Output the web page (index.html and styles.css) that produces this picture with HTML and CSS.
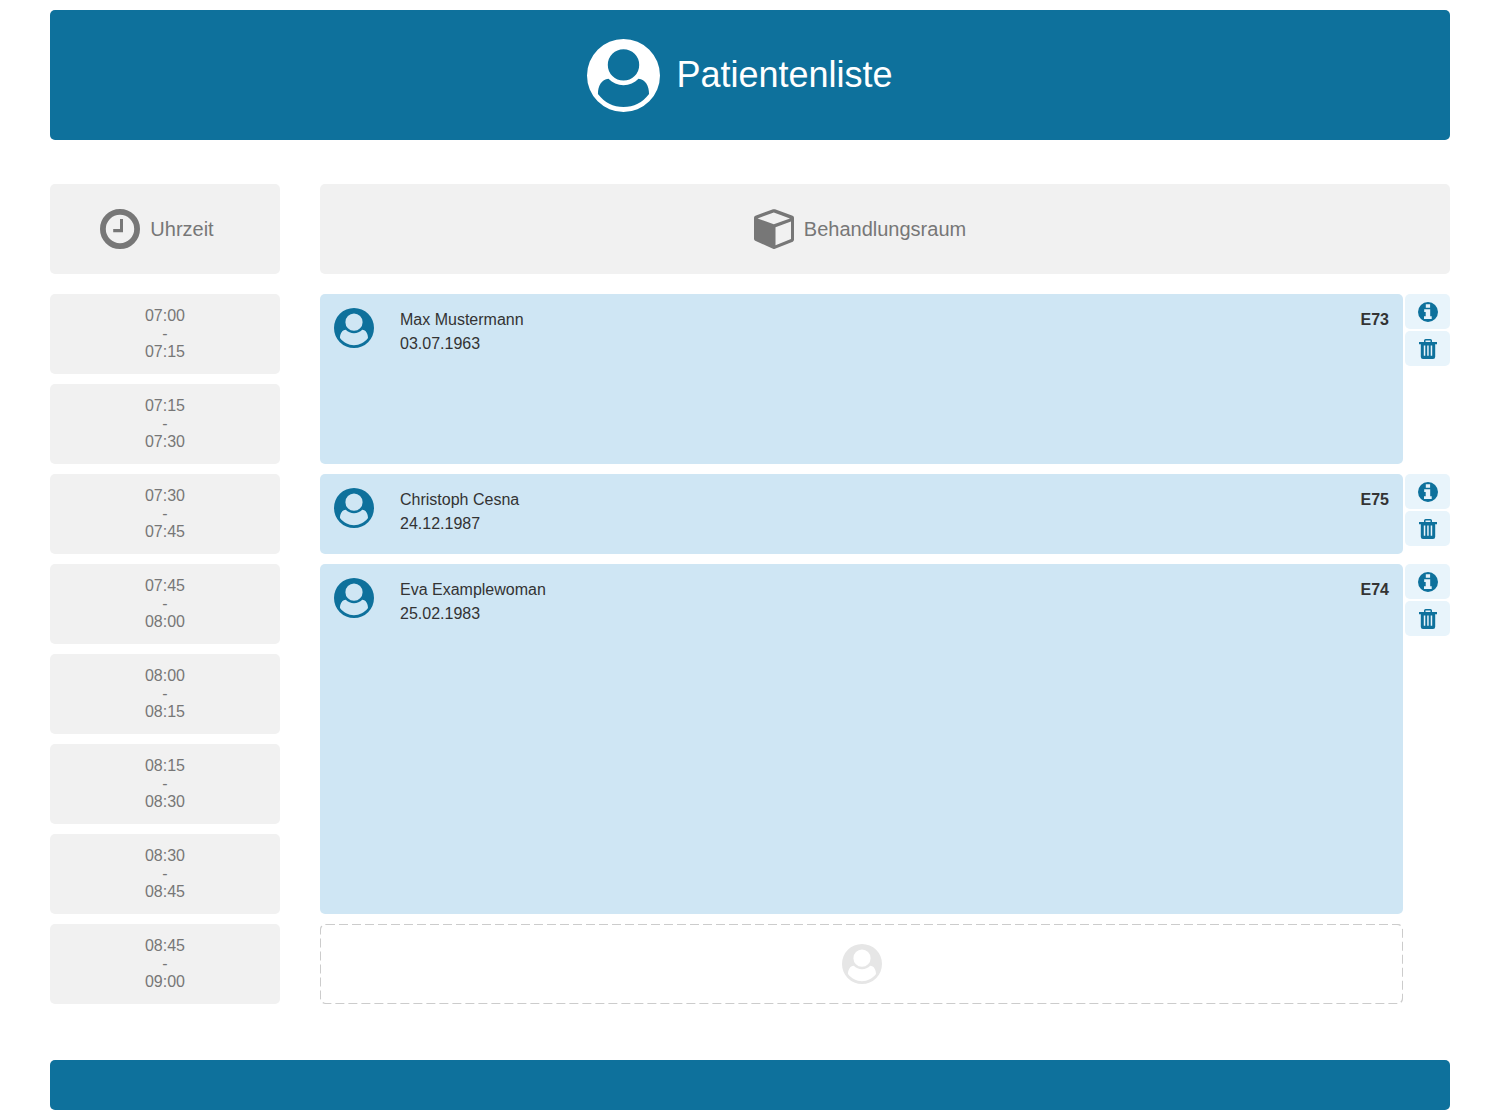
FILE: index.html
```html
<!DOCTYPE html>
<html lang="de">
<head>
    <meta charset="UTF-8">
    <meta name="viewport" content="width=device-width, initial-scale=1.0">
    <title>Patientenliste</title>
    <link rel="stylesheet" href="styles.css">
</head>
<body>
    <svg class="sprite" aria-hidden="true">
        <symbol id="icon-user" viewBox="0 0 100 100">
            <path fill-rule="evenodd" d="M50 0a50 50 0 1 0 0 100a50 50 0 1 0 0-100z M50 14a21.5 21.5 0 1 1 0 43a21.5 21.5 0 1 1 0-43z M29.4 54.6C20 55 15 65 15 75.2C24 87 36 93 50 93S76 87 85 75.2C85 65 80 55 70.6 54.6C65 60.5 58 63.3 50 63.3S35 60.5 29.4 54.6z"/>
        </symbol>
        <symbol id="icon-clock" viewBox="0 0 40 40">
            <circle cx="20" cy="20" r="17.1" fill="none" stroke="currentColor" stroke-width="5.8"/>
            <path d="M20 10h3v13.3H13.2v-3.2H20z"/>
        </symbol>
        <symbol id="icon-cube" viewBox="0 0 40 40">
            <path fill-rule="evenodd" d="M19 .3Q20 0 21 .3L38.6 6.8Q40 7.4 40 8.8V30.6Q40 32 38.8 32.7L21 39.8Q20 40.2 19 39.8L1.2 31.8Q0 31.2 0 29.8V8.8Q0 7.4 1.4 6.8z M19.8 3.6L3.6 9.4L19.8 15.2L36 9.4z M21.5 18.2V36.2L37 30V12.5z"/>
        </symbol>
        <symbol id="icon-info" viewBox="0 0 20 20">
            <path fill-rule="evenodd" d="M10 0a10 10 0 1 0 0 20a10 10 0 1 0 0-20z M7.8 2.2h4.3v3.6H7.8z M6.2 7.2h6v7h1.5v2.9H6v-2.9h1.7V10H6.2z"/>
        </symbol>
        <symbol id="icon-trash" viewBox="0 0 20 20">
            <path fill-rule="evenodd" d="M1 2.9h5V1.6Q6 0 7.6 0h4.8Q14 0 14 1.6v1.3h5v2.3h-1.8v12.6q0 2.2-2.2 2.2H5q-2.2 0-2.2-2.2V5.2H1z M7.5 2.9h5V1.5h-5z M5.8 6.6v10.2h1.5V6.6z M9.2 6.6v10.2h1.5V6.6z M12.7 6.6v10.2h1.5V6.6z"/>
        </symbol>
    </svg>

    <header class="header">
        <svg class="icon-big" aria-hidden="true"><use href="#icon-user"/></svg>
        <h1>Patientenliste</h1>
    </header>

    <main>
        <div class="heads">
            <div class="head head-time">
                <svg class="icon" aria-hidden="true"><use href="#icon-clock"/></svg>
                <h2>Uhrzeit</h2>
            </div>
            <div class="head head-room">
                <svg class="icon" aria-hidden="true"><use href="#icon-cube"/></svg>
                <h2>Behandlungsraum</h2>
            </div>
        </div>

        <div class="schedule">
            <div class="times">
                <div class="time">07:00<br>-<br>07:15</div>
                <div class="time">07:15<br>-<br>07:30</div>
                <div class="time">07:30<br>-<br>07:45</div>
                <div class="time">07:45<br>-<br>08:00</div>
                <div class="time">08:00<br>-<br>08:15</div>
                <div class="time">08:15<br>-<br>08:30</div>
                <div class="time">08:30<br>-<br>08:45</div>
                <div class="time">08:45<br>-<br>09:00</div>
            </div>

            <div class="patients">
                <div class="row span-2">
                    <div class="patient">
                        <svg class="icon" aria-hidden="true"><use href="#icon-user"/></svg>
                        <div class="data">Max Mustermann<br>03.07.1963</div>
                        <strong>E73</strong>
                    </div>
                    <div class="actions">
                        <button type="button" aria-label="Info"><svg><use href="#icon-info"/></svg></button>
                        <button type="button" aria-label="Löschen"><svg><use href="#icon-trash"/></svg></button>
                    </div>
                </div>

                <div class="row">
                    <div class="patient">
                        <svg class="icon" aria-hidden="true"><use href="#icon-user"/></svg>
                        <div class="data">Christoph Cesna<br>24.12.1987</div>
                        <strong>E75</strong>
                    </div>
                    <div class="actions">
                        <button type="button" aria-label="Info"><svg><use href="#icon-info"/></svg></button>
                        <button type="button" aria-label="Löschen"><svg><use href="#icon-trash"/></svg></button>
                    </div>
                </div>

                <div class="row span-4">
                    <div class="patient">
                        <svg class="icon" aria-hidden="true"><use href="#icon-user"/></svg>
                        <div class="data">Eva Examplewoman<br>25.02.1983</div>
                        <strong>E74</strong>
                    </div>
                    <div class="actions">
                        <button type="button" aria-label="Info"><svg><use href="#icon-info"/></svg></button>
                        <button type="button" aria-label="Löschen"><svg><use href="#icon-trash"/></svg></button>
                    </div>
                </div>

                <div class="row">
                    <button type="button" class="empty" aria-label="Patient hinzufügen">
                        <svg class="dashes" aria-hidden="true"><rect width="100%" height="100%" rx="6"/></svg>
                        <svg class="icon" aria-hidden="true"><use href="#icon-user"/></svg>
                    </button>
                </div>
            </div>
        </div>
    </main>

    <footer class="footer"></footer>
</body>
</html>
```
FILE: styles.css
```css
* {
    box-sizing: border-box;
}
body {
    margin: 0;
    padding: 10px 50px;
    background: #fff;
    color: #333;
    font-family: "Liberation Sans", Arial, sans-serif;
    font-size: 16px;
    line-height: 24px;
}
h1, h2 {
    margin: 0;
    font-weight: normal;
}
svg {
    display: block;
    fill: currentColor;
}
.sprite {
    position: absolute;
    width: 0;
    height: 0;
}
.icon {
    flex: none;
    width: 40px;
    height: 40px;
}
.icon-big {
    width: 73px;
    height: 73px;
}

/* header + footer */
.header, .footer {
    background: #0e719c;
    color: #fff;
    border-radius: 5px;
}
.header {
    display: flex;
    align-items: center;
    justify-content: center;
    gap: 16px;
    height: 130px;
    padding-right: 20px;
    margin-bottom: 44px;
}
.header h1 {
    font-size: 36px;
    line-height: 40px;
}
.footer {
    height: 50px;
    margin-top: 56px;
}

/* column titles */
.heads, .schedule {
    display: grid;
    grid-template-columns: 230px 1fr;
    column-gap: 40px;
}
.heads {
    margin-bottom: 20px;
}
.head {
    display: flex;
    align-items: center;
    justify-content: center;
    gap: 10px;
    height: 90px;
    background: #f1f1f1;
    color: #777;
    border-radius: 5px;
}
.head h2 {
    font-size: 20px;
    line-height: 24px;
}
.head-time {
    padding-right: 16px;
}
.head-room {
    padding-right: 50px;
}

/* time slots */
.times, .patients {
    display: grid;
    grid-template-rows: repeat(8, 80px);
    row-gap: 10px;
}
.time {
    padding-top: 13px;
    background: #f1f1f1;
    color: #777;
    border-radius: 5px;
    line-height: 18px;
    text-align: center;
}

/* patients */
.row {
    display: grid;
    grid-template-columns: 1fr 45px;
    column-gap: 2px;
}
.span-2 {
    grid-row: span 2;
}
.span-4 {
    grid-row: span 4;
}
.patient {
    display: flex;
    align-items: flex-start;
    padding: 14px;
    background: #cfe6f4;
    border-radius: 5px;
}
.patient .icon {
    color: #0e719c;
    margin-right: 26px;
}
.data {
    flex: 1;
}
.actions {
    display: flex;
    flex-direction: column;
    gap: 2px;
}
.actions button {
    display: flex;
    align-items: center;
    justify-content: center;
    height: 35px;
    padding: 0;
    border: none;
    border-radius: 5px;
    background: #e8f4fb;
    color: #0e719c;
    cursor: pointer;
}
.actions svg {
    width: 20px;
    height: 20px;
}
.empty {
    position: relative;
    display: flex;
    align-items: center;
    justify-content: center;
    padding: 0;
    border: none;
    border-radius: 5px;
    background: none;
    color: #e6e6e6;
    cursor: pointer;
}
/* longer dashes than border-style: dashed gives, outer half of the stroke is clipped */
.dashes {
    position: absolute;
    inset: 0;
    width: 100%;
    height: 100%;
    border-radius: 5px;
}
.dashes rect {
    fill: none;
    stroke: #ccc;
    stroke-width: 2px;
    stroke-dasharray: 9 4;
}
```
